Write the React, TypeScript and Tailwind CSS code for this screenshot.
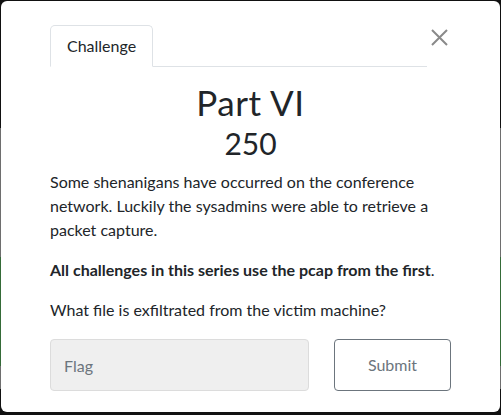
import React from 'react';

const Tab: React.FC<{ label: string }> = ({ label }) => (
  <li className="-mb-px">
    <span className="block px-4 py-2 leading-6 text-[16px] text-[#212529] bg-white border border-[#dee2e6] border-b-white rounded-t-[5px]">
      {label}
    </span>
  </li>
);

export default function App() {
  return (
    <div className="w-[501px] h-[415px] pl-[1px] pt-[1px] pr-[3px] pb-[3px] flex bg-[linear-gradient(to_bottom,#111_0px,#111_128px,#6e6e6e_128px,#6e6e6e_257px,#356b38_257px,#356b38_366px,#6e6e6e_366px,#6e6e6e_389px,#111_389px)] font-['Lato','Liberation_Sans',sans-serif]">
      <div className="flex-1 bg-white rounded-[6px] px-[49px] pt-[24px]">
        {/* tabs + close */}
        <div className="flex items-start">
          <ul className="flex flex-1 border-b border-[#dee2e6]">
            <Tab label="Challenge" />
          </ul>
          <button className="w-[24px] h-[24px] flex items-start justify-center pt-[4px]" aria-label="Close">
            <svg width="17" height="17" viewBox="0 0 17 17" className="text-[#8a8a8a]">
              <path d="M1 1L16 16M16 1L1 16" stroke="currentColor" strokeWidth="2" />
            </svg>
          </button>
        </div>

        <div className="w-[401px]">
          <h2 className="mt-[14px] text-center text-[35px] leading-[43px] text-[#212529] tracking-[0.6px]">Part VI</h2>
          <h3 className="text-center text-[30px] leading-[38px] text-[#212529]">250</h3>

          <div className="mt-[8px] text-[16px] leading-[24px] text-[#212529]">
            <p>Some shenanigans have occurred on the conference network. Luckily the sysadmins were able to retrieve a packet capture.</p>
            <p className="mt-[16px]"><strong className="font-bold">All challenges in this series use the pcap from the first</strong>.</p>
            <p className="mt-[16px]">What file is exfiltrated from the victim machine?</p>
          </div>

          <form className="mt-[17px] flex gap-[25px]" onSubmit={(e) => e.preventDefault()}>
            <input
              placeholder="Flag"
              className="w-[259px] h-[52px] px-[13px] bg-[#efefef] border border-[#dcdcdc] rounded-[4px] text-[16px] text-[#495057] placeholder:text-[#6c757d] outline-none"
            />
            <button className="w-[117px] h-[52px] border border-[#6c757d] rounded-[4px] text-[16px] text-[#6c757d] bg-white">
              Submit
            </button>
          </form>
        </div>
      </div>
    </div>
  );
}
